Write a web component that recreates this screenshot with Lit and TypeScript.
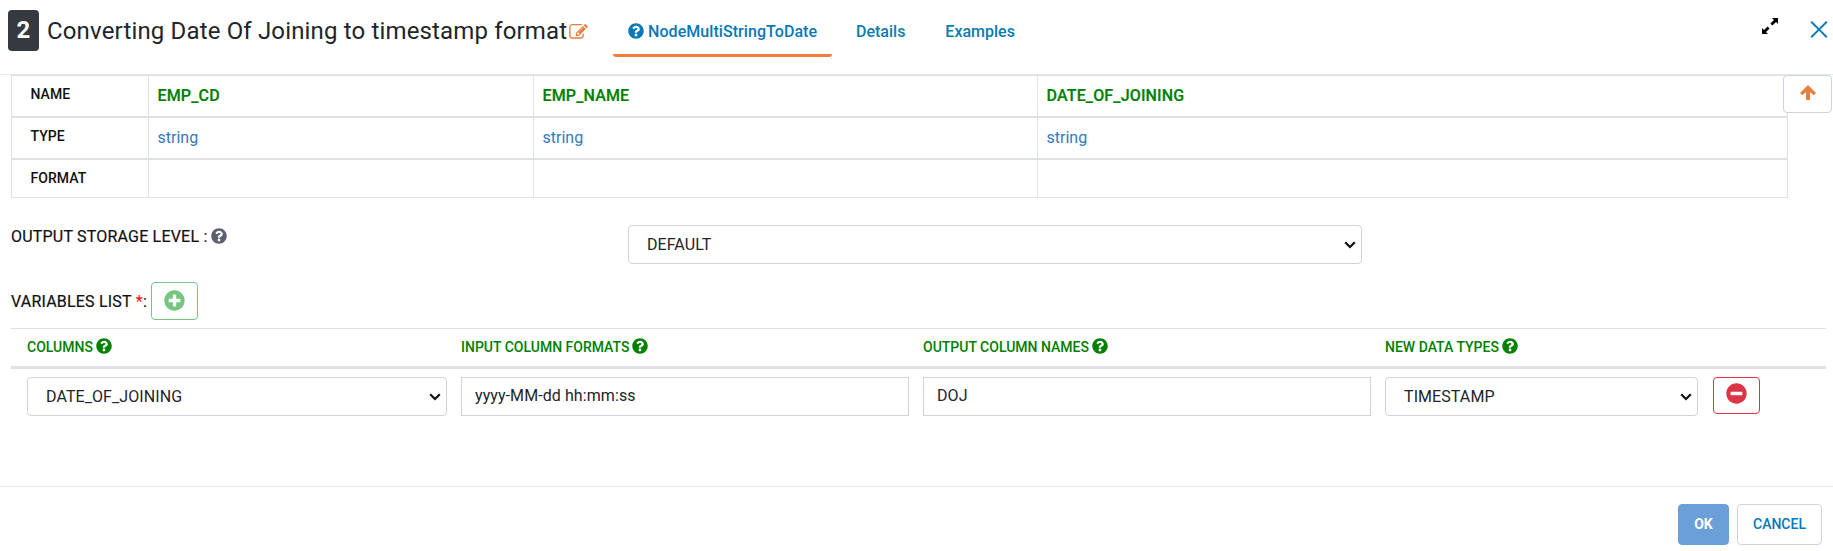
import { LitElement, html, css, svg } from "lit";
import { customElement } from "lit/decorators.js";

const P: Record<string, [string, string]> = {
  help: ["0 0 512 512", "M504 256c0 136.997-111.043 248-248 248S8 392.997 8 256C8 119.083 119.043 8 256 8s248 111.083 248 248zM262.655 90c-54.497 0-89.255 22.957-116.549 63.758-3.536 5.286-2.353 12.415 2.715 16.258l34.699 26.31c5.205 3.947 12.621 3.008 16.665-2.122 17.864-22.658 30.113-35.797 57.303-35.797 20.429 0 45.698 13.148 45.698 32.958 0 14.976-12.363 22.667-32.534 33.976C247.128 238.528 216 254.941 216 296v4c0 6.627 5.373 12 12 12h56c6.627 0 12-5.373 12-12v-1.333c0-28.462 83.186-29.647 83.186-106.667 0-58.002-60.165-102-116.531-102zM256 338c-25.365 0-46 20.635-46 46 0 25.364 20.635 46 46 46s46-20.636 46-46c0-25.365-20.635-46-46-46z"],
  plus: ["0 0 512 512", "M256 8C119 8 8 119 8 256s111 248 248 248 248-111 248-248S393 8 256 8zm144 276c0 6.600-5.400 12-12 12h-92v92c0 6.600-5.400 12-12 12h-56c-6.600 0-12-5.400-12-12v-92h-92c-6.600 0-12-5.400-12-12v-56c0-6.600 5.400-12 12-12h92v-92c0-6.600 5.400-12 12-12h56c6.600 0 12 5.400 12 12v92h92c6.600 0 12 5.400 12 12v56z"],
  minus: ["0 0 512 512", "M256 8C119 8 8 119 8 256s111 248 248 248 248-111 248-248S393 8 256 8zM124 296c-6.600 0-12-5.400-12-12v-56c0-6.600 5.400-12 12-12h264c6.600 0 12 5.400 12 12v56c0 6.600-5.400 12-12 12H124z"],
  edit: ["0 128 1792 1536", "M888 1184l116-116-152-152-116 116v56h96v96h56zm440-720q-16-16-33 1l-350 350q-17 17-1 33t33-1l350-350q17-17 1-33zm80 594v190q0 119-84.500 203.500t-203.500 84.500h-832q-119 0-203.500-84.500t-84.500-203.500v-832q0-119 84.500-203.500t203.500-84.500h832q63 0 117 25 15 7 18 23 3 17-9 29l-49 49q-14 14-32 8-23-6-45-6h-832q-66 0-113 47t-47 113v832q0 66 47 113t113 47h832q66 0 113-47t47-113v-126q0-13 9-22l64-64q15-15 35-7t20 29zm-96-738l288 288-672 672h-288v-288zm444 132l-92 92-288-288 92-92q28-28 68-28t68 28l152 152q28 28 28 68t-28 68z"],
  expand: ["0 0 16 16", "M10 0H16v6L14 4 10.400 7.600 8.400 5.600 12 2zM6 16H0V10L2 12 5.600 8.400 7.600 10.400 4 14z"],
  up: ["0 0 16 15", "M8 0L16 8 13.700 10.300 10 6.900V15H6V6.900L2.300 10.300 0 8z"],
  close: ["0 0 18 18", "M1.500 0L9 7.600 16.500 0 18 1.500 10.400 9 18 16.500 16.500 18 9 10.400 1.500 18 0 16.500 7.600 9 0 1.500z"],
};
const icon = (n: string) =>
  html`<svg class="i ${n}" viewBox=${P[n][0]} fill="currentColor">${svg`<path d=${P[n][1]}></path>`}</svg>`;

@customElement("app-root")
export class AppRoot extends LitElement {
  static styles = css`
    * { box-sizing: border-box; }
    :host { display: flex; flex-direction: column; height: 551px; overflow: hidden; background: #fff; color: #212529; font: 400 16px/24px Roboto, sans-serif; }
    .i { display: block; flex: none; }
    .help { width: 16px; height: 16px; }
    header { height: 75px; flex: none; display: flex; align-items: flex-start; border-bottom: 1px solid #e4e7ec; padding: 10px 5px 0 8px; }
    .badge { width: 31px; height: 41px; border-radius: 4px; background: #343a40; color: #fff; font: 700 24px/41px Roboto, sans-serif; text-align: center; }
    .title { width: 520px; margin: 0 2px 0 8px; font: 400 24px/42px Roboto, sans-serif; letter-spacing: 0.155px; white-space: nowrap; }
    .edit { width: 19px; height: 16px; margin-top: 14px; color: #e67e3c; }
    .tabs { display: flex; margin-left: 25px; font-weight: 500; color: #0a7cae; }
    .tab { height: 47px; padding: 10px 0 0; margin-right: 40px; display: flex; gap: 4px; }
    .tab.on { width: 219px; margin-right: 24px; padding-left: 15px; border-bottom: 3px solid #ee7f40; border-radius: 3px; color: #0878b8; letter-spacing: 0.06px; }
    .tab .help { margin-top: 3px; }
    .tools { margin-left: auto; display: flex; gap: 32px; }
    .expand { width: 16px; height: 16px; color: #000; margin-top: 8px; }
    .close { width: 18px; height: 17px; color: #0878ae; margin-top: 11px; }
    main { flex: none; height: 411px; padding: 0 7px 0 11px; }
    .schemawrap { display: flex; height: 123px; }
    .schema { width: 1777px; height: 123px; flex: none; display: grid; grid-template-columns: 137px 385px 504px 1fr; grid-template-rows: 42px 42px 38px; border: solid #dee2e6; border-width: 1px 1px 0 1px; }
    .schema > div { border-right: 1px solid #dee2e6; border-bottom: 2px solid #dee2e6; padding: 8px 8px 8px 8.500px; }
    .schema > div:nth-child(4n) { border-right: 0; }
    .schema > div:nth-child(n + 9) { border-bottom-width: 1px; }
    .schema .rowh { font-size: 14px; font-weight: 500; padding: 6px 18.500px; color: #111; letter-spacing: 0.05px; }
    .schema .col { color: #008000; font-weight: 500; letter-spacing: 0.16px; -webkit-text-stroke: 0.2px #008000; }
    .schema .type { color: #337ab7; }
    .up-btn { width: 49px; height: 38px; margin-left: -5px; flex: none; z-index: 1; background: #fff; border: 1px solid #ced4da; border-radius: 4px; display: grid; place-items: center; color: #e67e3c; }
    .up { width: 16px; height: 15px; margin-top: -3px; }
    .storage { display: flex; height: 84px; padding-top: 27px; }
    .label { color: #111; font-weight: 400; display: flex; white-space: nowrap; letter-spacing: 0.2px; -webkit-text-stroke: 0.2px #111; }
    .storage .label { width: 617px; }
    .label .help { margin: 3px 0 0 4px; color: #5a636d; -webkit-text-stroke: 0; }
    select, input { height: 39px; border: 1px solid #ced4da; background: #fff; color: #212529; font: 400 16px/24px Roboto, sans-serif; margin: 0; outline: 0; min-width: 0; }
    select { appearance: none; border-radius: 4px; padding: 6px 24px 6px 18px; letter-spacing: 0.08px; background: url("data:image/svg+xml,%3Csvg xmlns='http://www.w3.org/2000/svg' width='12' height='8' fill='none' stroke='%23111' stroke-width='2.2'%3E%3Cpath d='M1.200 1.200L6 6 10.800 1.200'/%3E%3C/svg%3E") no-repeat right 5px top 15px #fff; }
    input { padding: 4px 13px 6px; border-radius: 0; letter-spacing: 0.08px; }
    .storage select { width: 734px; }
    .vars { display: flex; height: 46px; }
    .vars .label { padding-top: 8px; width: 140px; }
    .star { color: red; margin-left: 4px; -webkit-text-stroke: 0; }
    .btn { width: 47px; height: 38px; border: 1px solid #76c580; color: #76c580; border-radius: 4px; display: grid; place-items: center; background: #fff; }
    .plus, .minus { width: 21px; height: 21px; margin-top: -2px; }
    .btn.red { border-color: #dc3545; color: #dc3545; height: 37px; margin-left: 1px; }
    .minus { margin-top: -4px; }
    .grid { display: grid; grid-template-columns: 420px 448px 448px 313px 48px; column-gap: 14px; padding-left: 16px; }
    .head { height: 41px; border-top: 1px solid #dee2e6; border-bottom: 3px solid #dee2e6; color: #008000; font-size: 14px; font-weight: 500; }
    .head > div { display: flex; gap: 3px; padding-top: 6px; }
    .head .help { margin-top: 3px; }
    .row { padding-top: 8px; }
    footer { flex: 1; border-top: 1px solid #e4e7ec; display: flex; justify-content: flex-end; gap: 8px; padding: 17px 11px 0 0; font-size: 14px; font-weight: 500; }
    footer div { height: 41px; line-height: 39px; border-radius: 4px; text-align: center; border: 1px solid #ced4da; color: #0878b8; width: 85px; }
    footer .ok { width: 51px; background: #6a9fd8; color: #fff; border-color: #6a9fd8; font-weight: 700; }
  `;
  render() {
    const cols = ["EMP_CD", "EMP_NAME", "DATE_OF_JOINING"];
    const heads = ["COLUMNS", "INPUT COLUMN FORMATS", "OUTPUT COLUMN NAMES", "NEW DATA TYPES"];
    return html`
      <header>
        <div class="badge">2</div>
        <div class="title"><span>Converting Date Of Joining to timestamp format</span></div>
        ${icon("edit")}
        <nav class="tabs">
          <div class="tab on">${icon("help")}<span>NodeMultiStringToDate</span></div>
          <div class="tab">Details</div>
          <div class="tab">Examples</div>
        </nav>
        <div class="tools">${icon("expand")}${icon("close")}</div>
      </header>
      <main>
        <div class="schemawrap">
          <div class="schema">
            <div class="rowh">NAME</div>${cols.map((c) => html`<div class="col">${c}</div>`)}
            <div class="rowh">TYPE</div>${cols.map(() => html`<div class="type">string</div>`)}
            <div class="rowh">FORMAT</div>${cols.map(() => html`<div></div>`)}
          </div>
          <div class="up-btn">${icon("up")}</div>
        </div>
        <div class="storage">
          <div class="label"><span>OUTPUT STORAGE LEVEL :</span>${icon("help")}</div>
          <select><option>DEFAULT</option></select>
        </div>
        <div class="vars">
          <div class="label">VARIABLES LIST<span class="star">*</span>:</div>
          <div class="btn">${icon("plus")}</div>
        </div>
        <div class="grid head">${heads.map((h) => html`<div><span>${h}</span>${icon("help")}</div>`)}</div>
        <div class="grid row">
          <select><option>DATE_OF_JOINING</option></select>
          <input value="yyyy-MM-dd hh:mm:ss" />
          <input value="DOJ" />
          <select><option>TIMESTAMP</option></select>
          <div class="btn red">${icon("minus")}</div>
        </div>
      </main>
      <footer><div class="ok">OK</div><div>CANCEL</div></footer>
    `;
  }
}
